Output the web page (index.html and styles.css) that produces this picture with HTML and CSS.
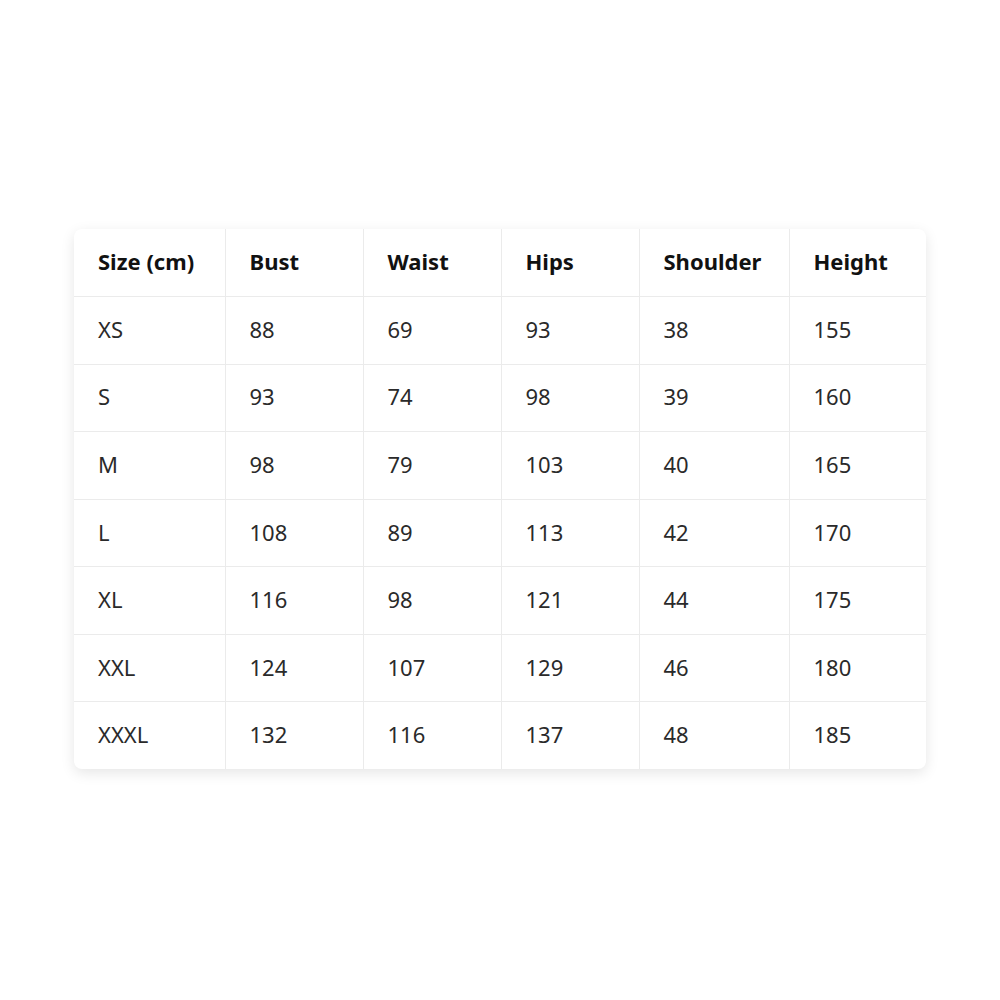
FILE: index.html
```html
<!DOCTYPE html>
<html>
<head>
<meta charset="utf-8">
<link rel="stylesheet" href="styles.css">
</head>
<body>
<div class="card">
<table class="size-table">
<colgroup>
<col class="c1"><col class="c2"><col class="c3"><col class="c4"><col class="c5"><col class="c6">
</colgroup>
<thead>
<tr><th>Size (cm)</th><th>Bust</th><th>Waist</th><th>Hips</th><th>Shoulder</th><th>Height</th></tr>
</thead>
<tbody>
<tr><td>XS</td><td>88</td><td>69</td><td>93</td><td>38</td><td>155</td></tr>
<tr><td>S</td><td>93</td><td>74</td><td>98</td><td>39</td><td>160</td></tr>
<tr><td>M</td><td>98</td><td>79</td><td>103</td><td>40</td><td>165</td></tr>
<tr><td>L</td><td>108</td><td>89</td><td>113</td><td>42</td><td>170</td></tr>
<tr><td>XL</td><td>116</td><td>98</td><td>121</td><td>44</td><td>175</td></tr>
<tr><td>XXL</td><td>124</td><td>107</td><td>129</td><td>46</td><td>180</td></tr>
<tr><td>XXXL</td><td>132</td><td>116</td><td>137</td><td>48</td><td>185</td></tr>
</tbody>
</table>
</div>
</body>
</html>
```

FILE: styles.css
```css
html, body {
  margin: 0;
  padding: 0;
  background: #ffffff;
}
body {
  min-height: 1000px;
  display: flex;
  align-items: center;
  justify-content: center;
  font-family: "Noto Sans", "Open Sans", sans-serif;
}
.card {
  width: 852px;
  background: #fff;
  border-radius: 8px;
  box-shadow: 0 4px 14px rgba(0, 0, 0, 0.1);
  overflow: hidden;
  margin-top: -2px;
}
.size-table {
  width: 100%;
  border-collapse: collapse;
  table-layout: fixed;
}
.c1 { width: 151px; }
.c2 { width: 138px; }
.c3 { width: 138px; }
.c4 { width: 138px; }
.c5 { width: 150px; }
.c6 { width: 137px; }
.size-table th,
.size-table td {
  text-align: left;
  padding: 0 0 3px 24px;
  height: 63.6px;
  font-size: 22px;
  line-height: 30px;
  border-right: 1px solid #ebebeb;
  border-bottom: 1px solid #ebebeb;
}
.size-table th {
  font-weight: 700;
  color: #111;
  height: 64px;
}
.size-table td {
  color: #2a2a2a;
}
.size-table th:last-child,
.size-table td:last-child {
  border-right: none;
}
.size-table tbody tr:last-child td {
  border-bottom: none;
}
```
